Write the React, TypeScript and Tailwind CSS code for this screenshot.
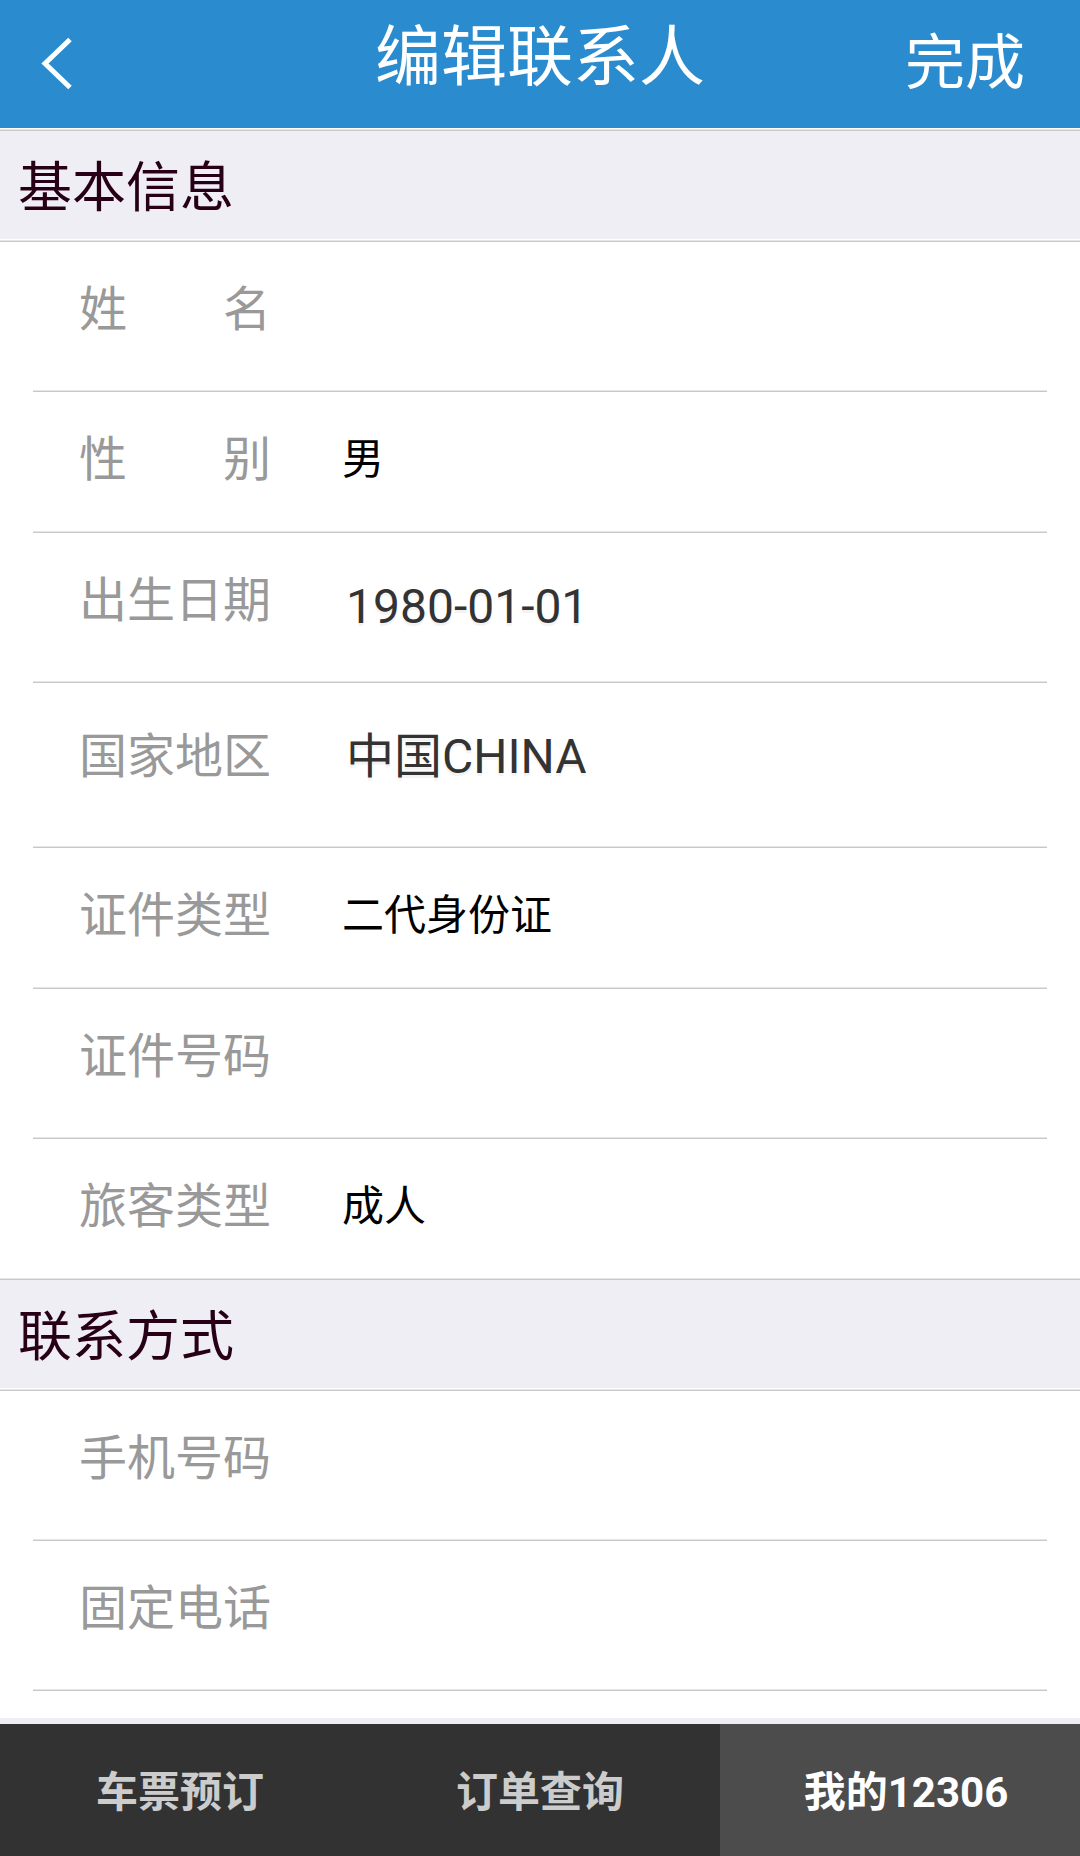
import { useId, type ReactNode } from 'react';

const DIVIDER = 'border-b border-[#c8c7cc] shadow-[inset_0_-1px_0_#e6e6e8]';

function SectionTitle({ children }: { children: ReactNode }) {
  return (
    <h2 className="flex h-28 items-center border-y border-[#c8c7cc] bg-[#efeef4] px-[18px] pt-1.5 text-[54px] leading-[80px] text-[#270018] shadow-[0_-1px_0_#e6e6e8,inset_0_-1px_0_#e6e6e8,inset_0_-2px_0_#ffffff]">
      {children}
    </h2>
  );
}

type RowProps = {
  label: string;
  kind: 'text' | 'tel' | 'date' | 'select' | 'picker';
  value?: string;
  options?: string[];
  size?: string;
  last?: boolean;
};

function Row({ label, kind, value = '', options = [], size = 'h-[150px] pt-8', last = false }: RowProps) {
  const id = useId();
  return (
    <div className={`mx-[33px] flex items-start pl-[46px] ${size} ${last ? '' : DIVIDER}`}>
      <label htmlFor={id} className="w-[263px] shrink-0 whitespace-pre text-5xl leading-[72px] text-[#999999]">
        {label}
      </label>
      {(kind === 'text' || kind === 'tel') && (
        <input
          id={id}
          type={kind}
          defaultValue={value}
          className="h-[72px] min-w-0 flex-1 bg-transparent text-[42px] text-black outline-none"
        />
      )}
      {kind === 'select' && (
        <select
          id={id}
          defaultValue={value}
          className="h-[72px] min-w-0 flex-1 appearance-none bg-transparent text-[42px] leading-[72px] text-black outline-none"
        >
          {options.map((o) => (
            <option key={o}>{o}</option>
          ))}
        </select>
      )}
      {(kind === 'picker' || kind === 'date') && (
        <button
          id={id}
          type="button"
          className={`min-w-0 flex-1 pl-1 text-left text-5xl text-[#333333] [text-shadow:0_3px_0_#f3f3f3] ${
            kind === 'date' ? 'leading-[84px]' : 'leading-[72px]'
          }`}
        >
          {value}
        </button>
      )}
    </div>
  );
}

const tabs = [
  { label: '车票预订', active: false },
  { label: '订单查询', active: false },
  { label: '我的12306', active: true },
];

export default function App() {
  return (
    <div className="flex min-h-screen flex-col bg-white font-[Roboto,'Noto_Sans_CJK_SC',sans-serif]">
      <header className="mb-0.5 grid h-32 grid-cols-[1fr_auto_1fr] items-start bg-[#2a8ccf] text-white">
        <button type="button" aria-label="返回" className="justify-self-start pl-[41px] pt-[37px]">
          <svg width="31" height="53" viewBox="0 0 31 53" fill="none" stroke="currentColor" strokeWidth="5">
            <path d="M29 2.5 4 26.5 29 50.5" />
          </svg>
        </button>
        <h1 className="pt-3 text-[66px] leading-[92px]">编辑联系人</h1>
        <button type="button" className="justify-self-end pr-[55px] pt-5 text-[60px] leading-[88px]">
          完成
        </button>
      </header>

      <main className="flex-1">
        <SectionTitle>基本信息</SectionTitle>
        <Row label="姓　　名" kind="text" />
        <Row label="性　　别" kind="select" value="男" options={['男', '女']} size="h-[141px] pt-8" />
        <Row label="出生日期" kind="date" value="1980-01-01" />
        <Row label="国家地区" kind="picker" value="中国CHINA" size="h-[165px] pt-[38px]" />
        <Row
          label="证件类型"
          kind="select"
          value="二代身份证"
          options={['二代身份证', '护照']}
          size="h-[141px] pt-8"
        />
        <Row label="证件号码" kind="text" />
        <Row
          label="旅客类型"
          kind="select"
          value="成人"
          options={['成人', '儿童', '学生']}
          size="h-[140px] pt-8"
          last
        />
        <SectionTitle>联系方式</SectionTitle>
        <Row label="手机号码" kind="tel" />
        <Row label="固定电话" kind="tel" />
      </main>

      <nav className="sticky bottom-0 grid grid-cols-3 border-t-[6px] border-[#efeef4] bg-[#323232]">
        {tabs.map((t) => (
          <a
            key={t.label}
            href="#"
            aria-current={t.active ? 'page' : undefined}
            className={`flex h-[132px] items-center justify-center pt-1 text-[42px] font-bold ${
              t.active ? 'bg-[#4c4c4c] pl-3 text-white' : 'text-[#cccccc]'
            }`}
          >
            {t.label}
          </a>
        ))}
      </nav>
    </div>
  );
}
